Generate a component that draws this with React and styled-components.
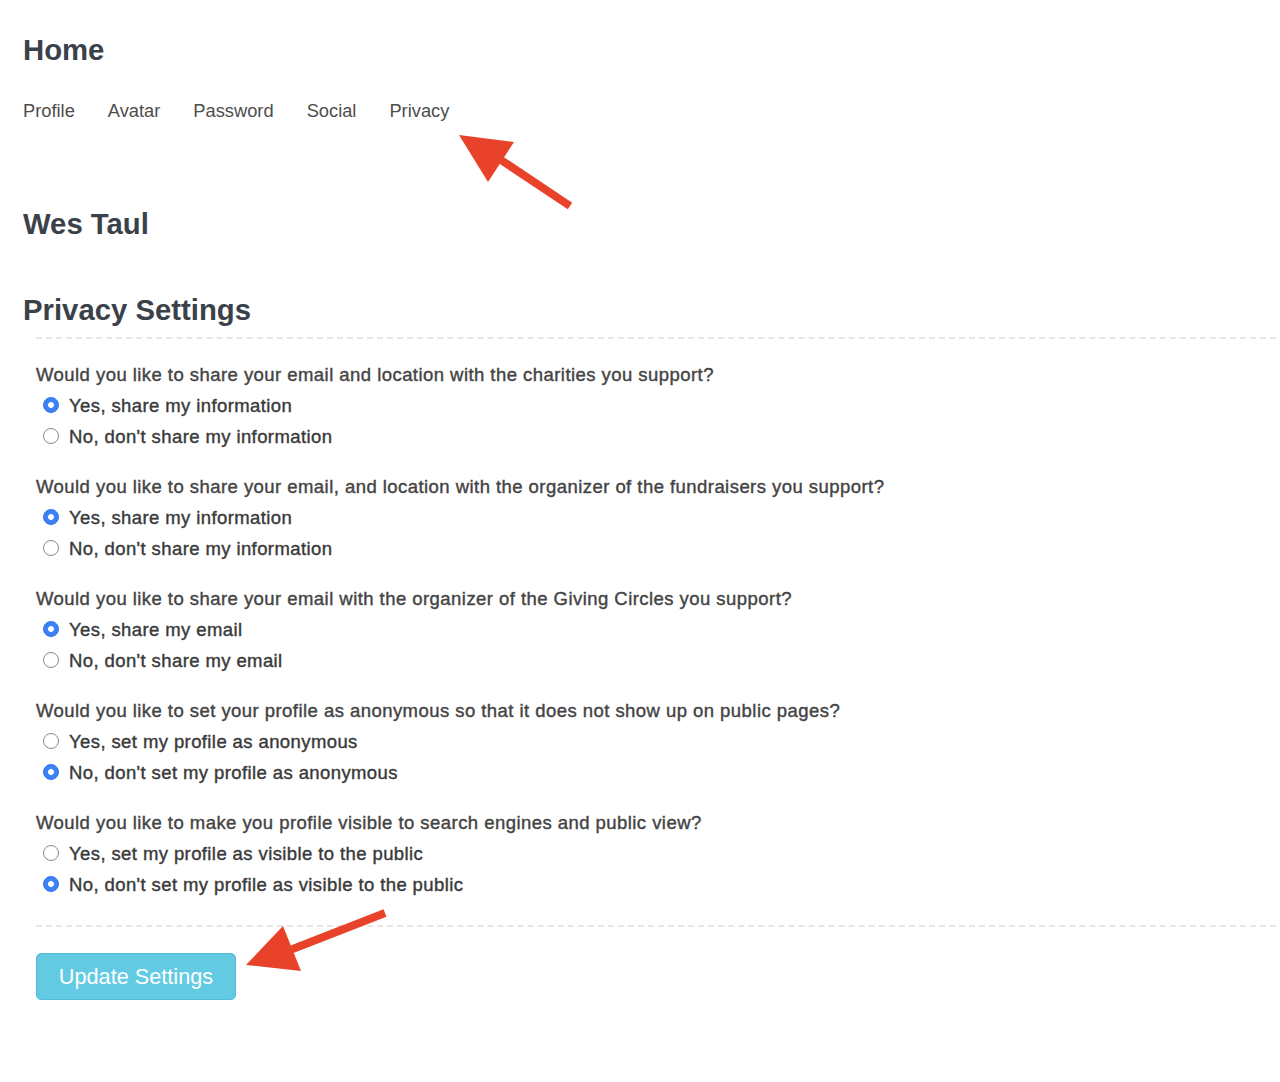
import React from 'react';
import styled, { createGlobalStyle } from 'styled-components';

const GlobalStyle = createGlobalStyle`
  body {
    margin: 0;
    background: #fff;
    font-family: "Liberation Sans", Arial, sans-serif;
  }
`;

const Page = styled.div`
  position: relative;
  width: 1280px;
  min-height: 1082px;
  box-sizing: border-box;
  padding: 32px 4px 0 23px;
`;

const Title = styled.h1`
  margin: 0;
  font-size: 29.3px;
  line-height: 36px;
  font-weight: bold;
  color: #3b4149;
`;

const Nav = styled.nav`
  display: flex;
  gap: 33px;
  margin-top: 31px;
`;

const NavLink = styled.a`
  font-size: 18.3px;
  line-height: 24px;
  color: #4d4d4d;
  text-decoration: none;
`;

const Name = styled(Title)`
  margin-top: 83px;
`;

const SectionTitle = styled(Title)`
  margin-top: 50px;
`;

const Form = styled.form`
  margin: 9px 0 0 13px;
`;

const Divider = styled.hr`
  margin: 0;
  border: none;
  border-top: 2px dashed #e6e6e6;
  height: 0;
`;

const Questions = styled.div`
  display: flex;
  flex-direction: column;
  gap: 20px;
  padding: 21px 0 25px;
`;

const Group = styled.fieldset`
  margin: 0;
  padding: 0;
  border: none;
`;

const Question = styled.div`
  font-size: 18.5px;
  line-height: 30px;
  color: #444;
  letter-spacing: 0.45px;
  -webkit-text-stroke: 0.4px #444;
`;

const Option = styled.label`
  display: flex;
  align-items: center;
  gap: 10px;
  height: 31px;
  padding-left: 7px;
  font-size: 18.5px;
  color: #3a3a3a;
  letter-spacing: 0.4px;
  -webkit-text-stroke: 0.4px #3a3a3a;
  cursor: pointer;
`;

const Radio = styled.input`
  appearance: none;
  margin: -2px 0 0;
  width: 16px;
  height: 16px;
  border-radius: 50%;
  border: 1px solid #8a8a8a;
  background: #fff;
  box-sizing: border-box;
  flex-shrink: 0;

  &:checked {
    border: 1px solid #2a6ee8;
    background: radial-gradient(circle, #fff 0 2.6px, #3b82f6 3.2px);
  }
`;

const Button = styled.button`
  margin-top: 26px;
  width: 200px;
  height: 47px;
  border: 1px solid #52bcd8;
  border-radius: 5px;
  background: #62cbe3;
  color: #fff;
  font-family: "Liberation Sans", Arial, sans-serif;
  font-size: 21.7px;
  cursor: pointer;
`;

const Overlay = styled.svg`
  position: absolute;
  top: 0;
  left: 0;
  pointer-events: none;
`;

const questions = [
  {
    text: 'Would you like to share your email and location with the charities you support?',
    options: ['Yes, share my information', "No, don't share my information"],
    checked: 0,
  },
  {
    text: 'Would you like to share your email, and location with the organizer of the fundraisers you support?',
    options: ['Yes, share my information', "No, don't share my information"],
    checked: 0,
  },
  {
    text: 'Would you like to share your email with the organizer of the Giving Circles you support?',
    options: ['Yes, share my email', "No, don't share my email"],
    checked: 0,
  },
  {
    text: 'Would you like to set your profile as anonymous so that it does not show up on public pages?',
    options: ['Yes, set my profile as anonymous', "No, don't set my profile as anonymous"],
    checked: 1,
  },
  {
    text: 'Would you like to make you profile visible to search engines and public view?',
    options: ['Yes, set my profile as visible to the public', "No, don't set my profile as visible to the public"],
    checked: 1,
  },
];

const tabs = ['Profile', 'Avatar', 'Password', 'Social', 'Privacy'];

const App = () => {
  return (
    <Page>
      <GlobalStyle />
      <Title>Home</Title>
      <Nav>
        {tabs.map((t) => (
          <NavLink key={t} href="#">{t}</NavLink>
        ))}
      </Nav>
      <Name>Wes Taul</Name>
      <SectionTitle>Privacy Settings</SectionTitle>
      <Form onSubmit={(e) => e.preventDefault()}>
        <Divider />
        <Questions>
          {questions.map((q, i) => (
            <Group key={i}>
              <Question>{q.text}</Question>
              {q.options.map((o, j) => (
                <Option key={o}>
                  <Radio type="radio" name={`q${i}`} defaultChecked={q.checked === j} />
                  {o}
                </Option>
              ))}
            </Group>
          ))}
        </Questions>
        <Divider />
        <Button type="submit">Update Settings</Button>
      </Form>

      {/* annotation arrows */}
      <Overlay width="1280" height="1082" viewBox="0 0 1280 1082">
        <line x1="570" y1="206" x2="498" y2="158" stroke="#e8432a" strokeWidth="8" />
        <polygon points="459,135 514,142 488,182" fill="#e8432a" />
        <line x1="385" y1="913" x2="285" y2="952" stroke="#e8432a" strokeWidth="8" />
        <polygon points="246,965 283,926 301,971" fill="#e8432a" />
      </Overlay>
    </Page>
  );
};

export default App;
